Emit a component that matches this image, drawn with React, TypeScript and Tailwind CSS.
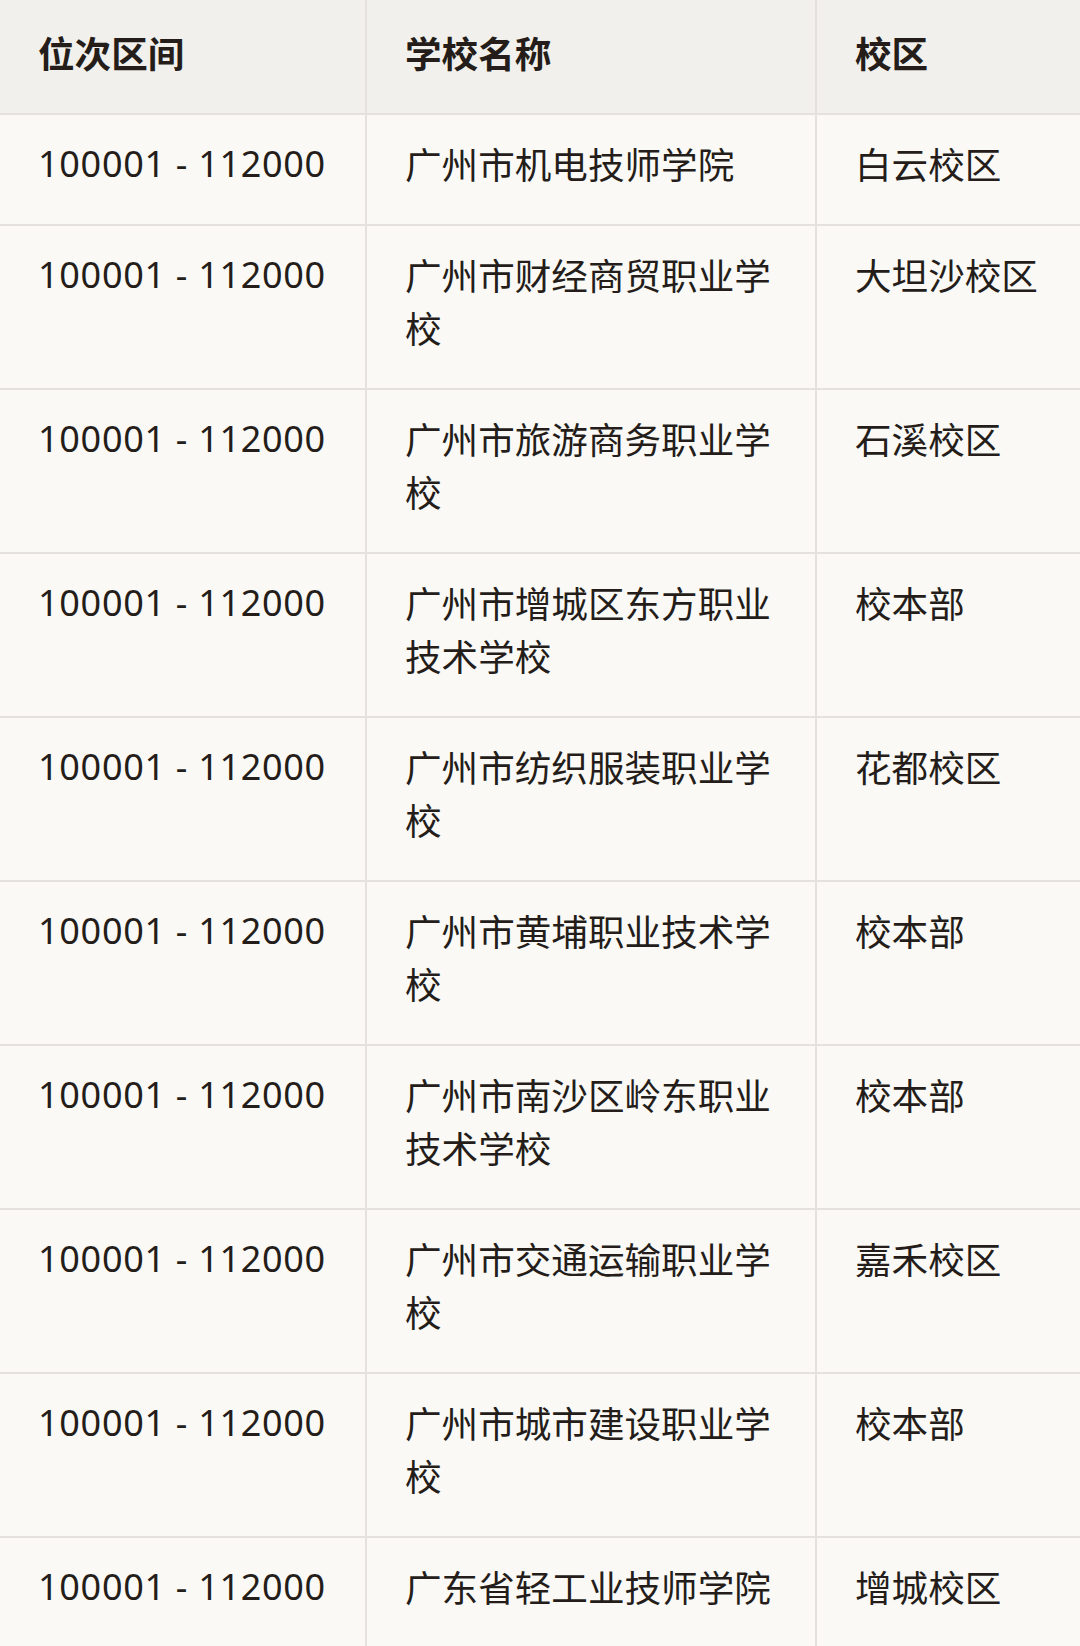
import React from "react";

const rows: [string, string, string][] = [
  ["100001 - 112000", "广州市机电技师学院", "白云校区"],
  ["100001 - 112000", "广州市财经商贸职业学校", "大坦沙校区"],
  ["100001 - 112000", "广州市旅游商务职业学校", "石溪校区"],
  ["100001 - 112000", "广州市增城区东方职业技术学校", "校本部"],
  ["100001 - 112000", "广州市纺织服装职业学校", "花都校区"],
  ["100001 - 112000", "广州市黄埔职业技术学校", "校本部"],
  ["100001 - 112000", "广州市南沙区岭东职业技术学校", "校本部"],
  ["100001 - 112000", "广州市交通运输职业学校", "嘉禾校区"],
  ["100001 - 112000", "广州市城市建设职业学校", "校本部"],
  ["100001 - 112000", "广东省轻工业技师学院", "增城校区"],
];

export default function App() {
  return (
    <div
      className="w-[1080px] h-[1646px] overflow-hidden bg-[#faf9f6] text-[#241d19] text-[36.6px] leading-[53px]"
      style={{ fontFamily: '"Noto Sans CJK SC", "Noto Sans", sans-serif' }}
    >
      <div className="grid grid-cols-[367px_450px_263px] bg-[#f2f0ec] font-semibold">
        <div className="pl-[38px] pt-[26px] pb-[34px] border-r-2 border-[#e5e2dd]">位次区间</div>
        <div className="pl-[38px] pr-[38px] pt-[26px] pb-[34px] border-r-2 border-[#e5e2dd]">学校名称</div>
        <div className="pl-[38px] pt-[26px] pb-[34px]">校区</div>
      </div>
      {rows.map((r, i) => (
        <div key={i} className="grid grid-cols-[367px_450px_263px] border-t-2 border-[#e5e2dd]">
          <div
            className="pl-[38px] pt-[22px] pb-[34px] border-r-2 border-[#e5e2dd] whitespace-nowrap text-[36px] tracking-[0.7px]"
            style={{ fontFamily: '"Noto Sans", "Noto Sans CJK SC", sans-serif' }}
          >
            {r[0]}
          </div>
          <div className="pl-[38px] pr-[38px] pt-[22px] pb-[34px] border-r-2 border-[#e5e2dd]">{r[1]}</div>
          <div className="pl-[38px] pr-[10px] pt-[22px] pb-[34px] whitespace-nowrap">{r[2]}</div>
        </div>
      ))}
    </div>
  );
}
